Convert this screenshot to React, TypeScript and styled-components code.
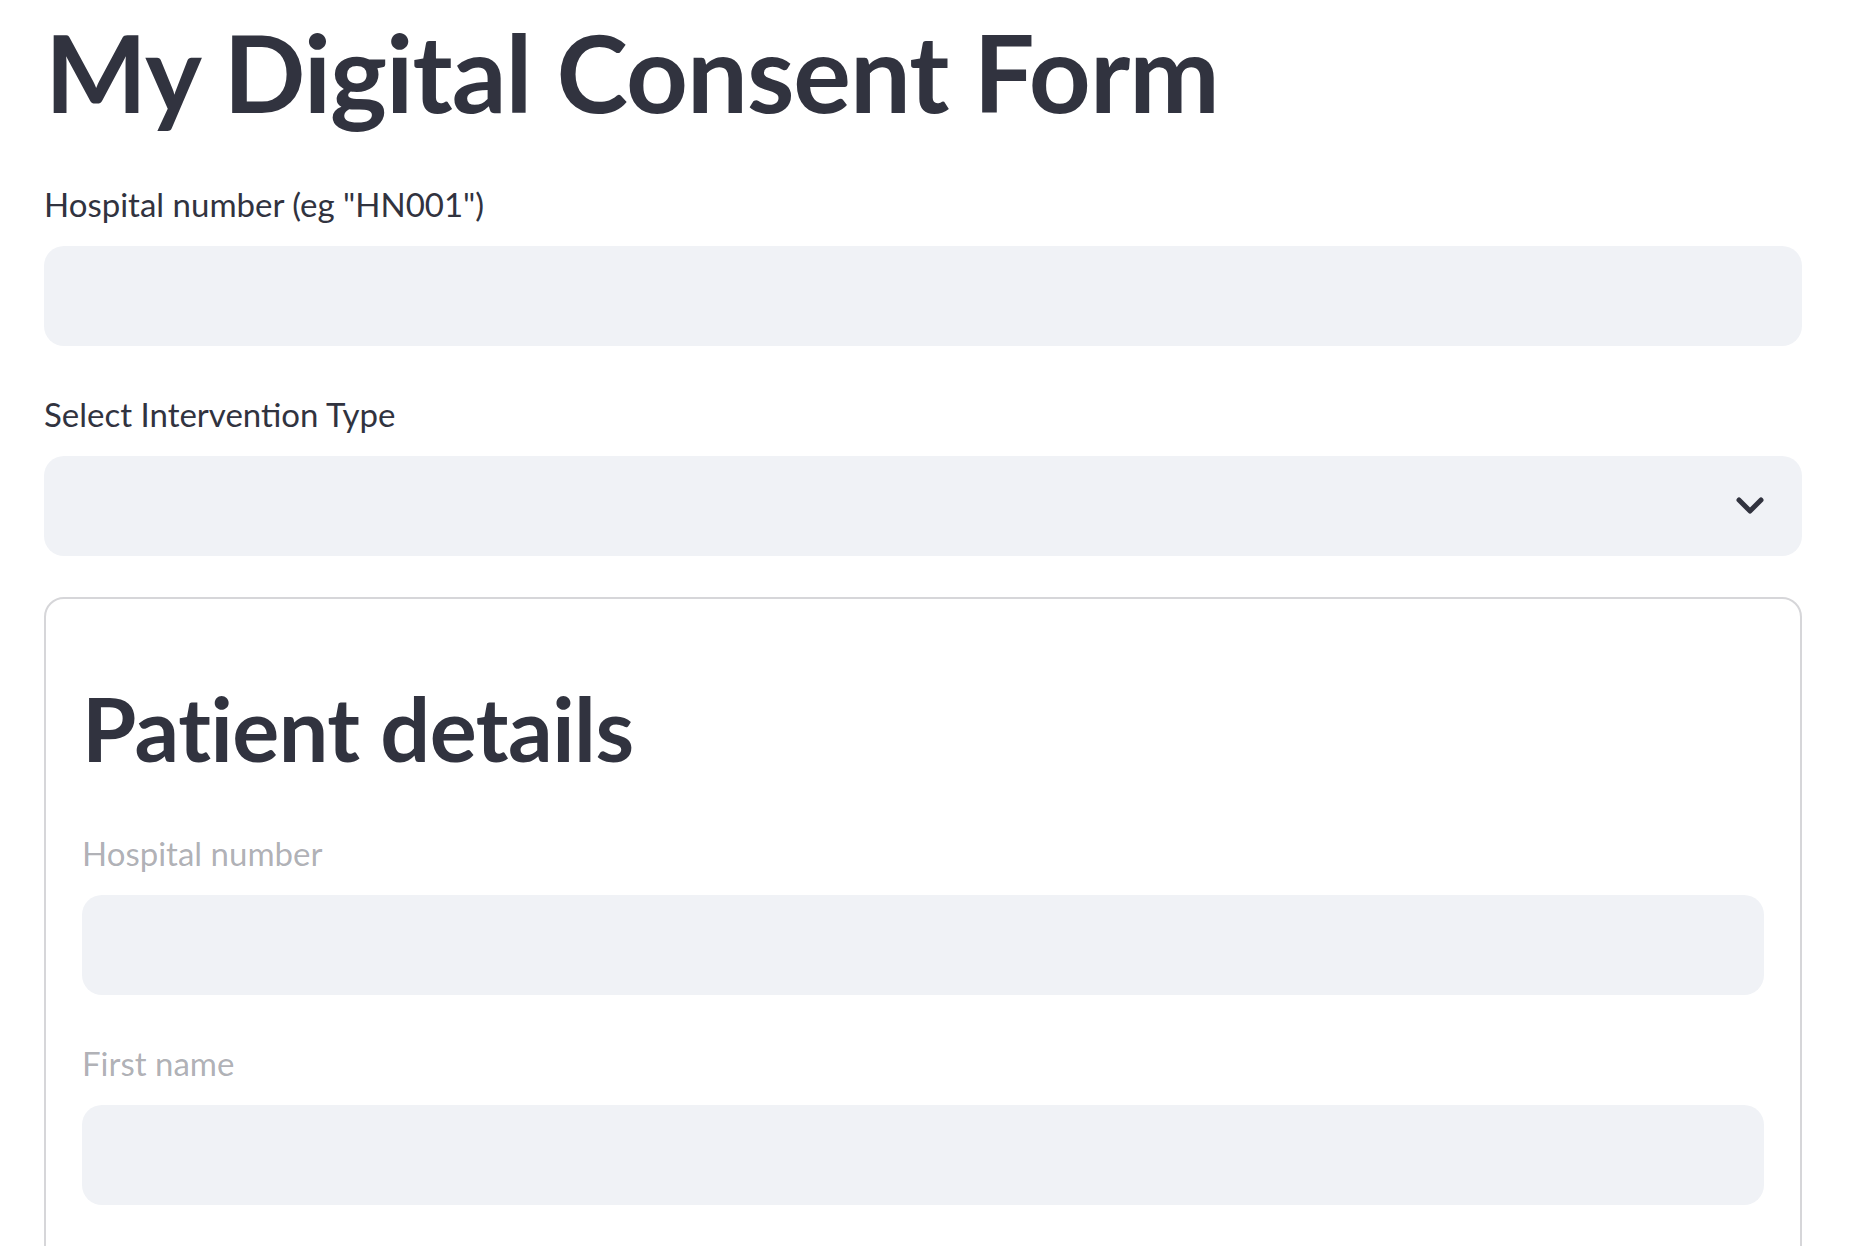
import styled, { createGlobalStyle } from "styled-components";

const GlobalStyle = createGlobalStyle`
    body {
        margin: 0;
        background: #ffffff;
        font-family: "Lato", "Noto Sans", sans-serif;
        color: #31333f;
    }
`;

const Main = styled.main`
    padding: 0 56px 0 44px;
    display: flex;
    flex-direction: column;
`;

const Title = styled.h1`
    margin: 0;
    padding: 6px 0 0 1px;
    font-size: 108px;
    line-height: 130px;
    font-weight: 700;
    letter-spacing: -1px;
    color: #31333f;
`;

const Field = styled.div<{ $first?: boolean; $gap?: number }>`
    display: flex;
    flex-direction: column;
    margin-top: ${(p) => (p.$gap ?? 48)}px;
`;

const Label = styled.label<{ $disabled?: boolean }>`
    font-size: 33px;
    line-height: 40px;
    height: 40px;
    margin-bottom: 22px;
    color: ${(p) => (p.$disabled ? "rgba(49, 51, 63, 0.4)" : "#31333f")};
`;

const InputBox = styled.input`
    box-sizing: border-box;
    height: 100px;
    width: 100%;
    border: none;
    border-radius: 20px;
    background: #f0f2f6;
    padding: 0 30px;
    font-size: 35px;
    font-family: inherit;
    outline: none;
`;

const SelectBox = styled.div`
    height: 100px;
    border-radius: 20px;
    background: #f0f2f6;
    display: flex;
    align-items: center;
    justify-content: flex-end;
    padding-right: 38px;
    color: #31333f;
`;

const Card = styled.section`
    margin-top: 41px;
    border: 2px solid #d6d6d9;
    border-radius: 20px;
    padding: 38px 36px 200px;
    display: flex;
    flex-direction: column;
`;

const Heading = styled.h2`
    margin: 0;
    padding-top: 38px;
    font-size: 88px;
    line-height: 106px;
    font-weight: 700;
    letter-spacing: -0.5px;
    color: #31333f;
`;

function Chevron() {
    return (
        <svg width="28" height="18" viewBox="0 0 28 18" fill="none">
            <polyline
                points="3,3 14,14 25,3"
                stroke="currentColor"
                strokeWidth="5"
                strokeLinecap="round"
                strokeLinejoin="round"
            />
        </svg>
    );
}

export default function App() {
    return (
        <>
            <GlobalStyle />
            <Main>
                <Title>My Digital Consent Form</Title>
                <Field $gap={48}>
                    <Label>Hospital number (eg "HN001")</Label>
                    <InputBox type="text" />
                </Field>
                <Field>
                    <Label>Select Intervention Type</Label>
                    <SelectBox>
                        <Chevron />
                    </SelectBox>
                </Field>
                <Card>
                    <Heading>Patient details</Heading>
                    <Field $gap={52}>
                        <Label $disabled>Hospital number</Label>
                        <InputBox type="text" disabled />
                    </Field>
                    <Field>
                        <Label $disabled>First name</Label>
                        <InputBox type="text" disabled />
                    </Field>
                </Card>
            </Main>
        </>
    );
}
